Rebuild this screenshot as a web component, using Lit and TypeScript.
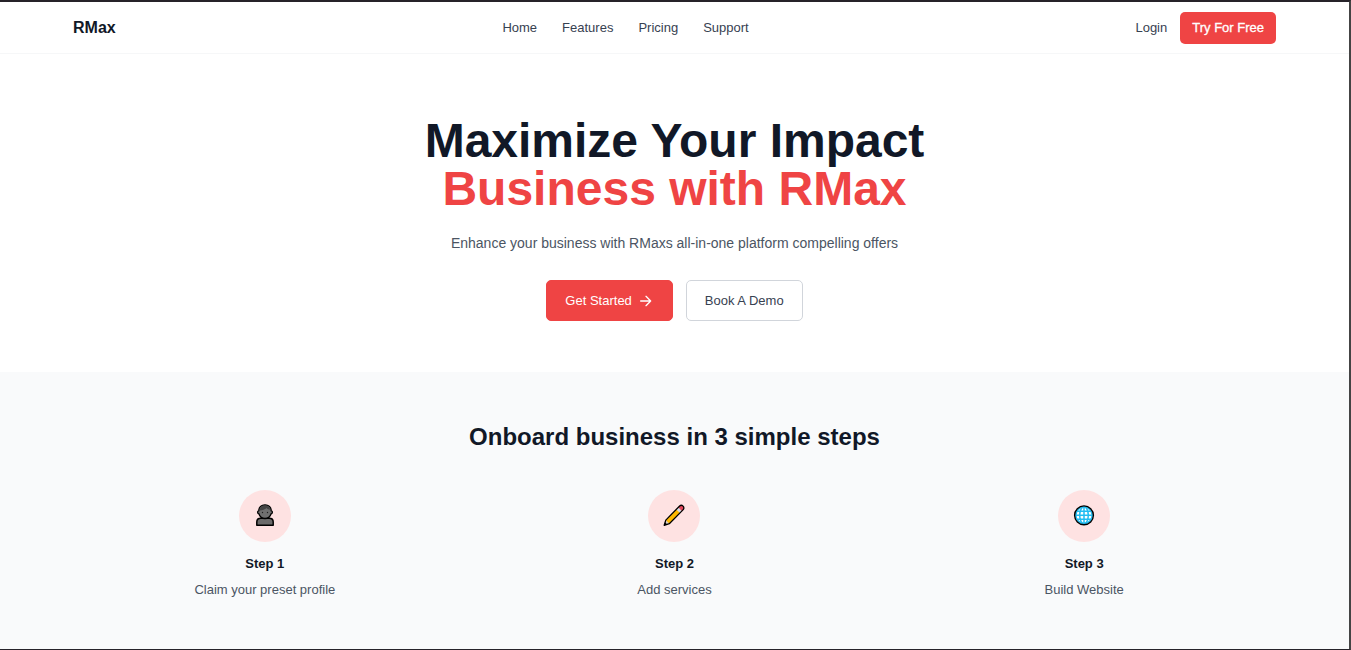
import { LitElement, html, css, svg } from "lit";
import { customElement } from "lit/decorators.js";

const personIcon = svg`
  <path d="M3.800 21.300v-3.300c0-2.400 1.700-3.700 4-3.700h8.400c2.300 0 4 1.300 4 3.700v3.300z" fill="#6b6b6b" stroke="#000" stroke-width="1.500" stroke-linejoin="round"/>
  <path d="M12 .8c-3.700 0-6.200 2.600-6.200 5.900-.7.200-1.200.8-1.200 1.600s.6 1.500 1.400 1.700c.8 2.600 3.100 4.500 6 4.500s5.200-1.900 6-4.500c.8-.2 1.400-.9 1.400-1.700s-.5-1.400-1.200-1.600c0-3.300-2.500-5.900-6.200-5.900z" fill="#707070" stroke="#000" stroke-width="1.300"/>
  <path d="M6.600 6.400c.2-3 2.300-4.900 5.400-4.900 3 0 4.900 1.700 5.300 4.200-1.700 0-2.900-.7-3.800-1.800-1.500 1.700-3.900 2.500-6.900 2.500z" fill="#444"/>
  <circle cx="9.500" cy="8.500" r=".7" fill="#222"/><circle cx="14.500" cy="8.500" r=".7" fill="#222"/>`;

const pencilIcon = svg`
  <path d="M2.200 21.300l1.600-5.200L17.400 2.200c1.200-1.200 2.700-1.100 3.700-.1s1.100 2.600-.1 3.800L7.300 19.700z" fill="#ffb900"/>
  <path d="M14.200 5.400l2.600-2.600 3.800 3.700-2.600 2.500z" fill="#d9dce3"/>
  <path d="M16.200 3.300l1.200-1.100c1.200-1.200 2.700-1.100 3.700-.1s1.100 2.600-.1 3.800L19.900 7z" fill="#e0455a"/>
  <path d="M3.800 16.100l3.500 3.600-5.100 1.600z" fill="#d8d0c8"/>
  <path d="M2.200 21.300l.9-3 2.100 2.100z"/>
  <path d="M2.200 21.300l1.600-5.200L17.400 2.200c1.200-1.200 2.700-1.100 3.700-.1s1.100 2.600-.1 3.800L7.300 19.700z" fill="none" stroke="#000" stroke-width="1.300" stroke-linejoin="round"/>`;

const globeIcon = svg`
  <circle cx="12" cy="11.300" r="9.500" fill="#fff"/>
  <g fill="none" stroke="#22bdf2" stroke-width="1.500">
    <circle cx="12" cy="11.300" r="8.200"/>
    <ellipse cx="12" cy="11.300" rx="4.300" ry="8.500"/>
    <path d="M12 2.800v17M3.500 11.300h17M5 7.300h14M5 15.300h14"/>
  </g>
  <circle cx="12" cy="11.300" r="9.400" fill="none" stroke="#000" stroke-width="1.400"/>`;

const steps = [
  { title: "Step 1", text: "Claim your preset profile", icon: personIcon },
  { title: "Step 2", text: "Add services", icon: pencilIcon },
  { title: "Step 3", text: "Build Website", icon: globeIcon },
];

@customElement("app-root")
export class AppRoot extends LitElement {
  static styles = css`
    :host {
      display: flex;
      flex-direction: column;
      box-sizing: border-box;
      min-height: 100vh;
      border: 0 solid #262329;
      border-width: 2px 2px 1px 0;
      border-right-color: #444;
      background: #fff;
      color: #374151;
      font: 13px/20px "Liberation Sans", Arial, sans-serif;
    }
    h1, h2, h3, p { margin: 0; }
    a { color: inherit; text-decoration: none; }
    button { font: inherit; cursor: pointer; }
    .header { border-bottom: 1px solid #f6f7f8; }
    .container {
      box-sizing: border-box;
      width: 100%;
      max-width: 1229px;
      margin: 0 auto;
      padding: 0 13px;
    }
    .bar {
      display: flex;
      align-items: center;
      justify-content: space-between;
      height: 51px;
    }
    .logo { color: #111827; font-size: 16px; font-weight: 700; }
    .nav { display: flex; gap: 25px; }
    .actions {
      display: flex;
      align-items: center;
      gap: 13px;
    }
    .trial {
      height: 32px;
      padding: 0 12px;
      border: 0;
      border-radius: 5px;
      background: #ef4444;
      color: #fff;
      -webkit-text-stroke: 0.3px #fff;
    }
    .hero {
      padding: 63px 13px 51px;
      text-align: center;
    }
    .headline {
      color: #111827;
      font-size: 48px;
      line-height: 48px;
      font-weight: 700;
    }
    .accent { display: block; color: #ef4444; }
    .lead {
      margin-top: 19px;
      color: #4b5563;
      font-size: 14px;
      line-height: 22px;
    }
    .buttons {
      display: flex;
      justify-content: center;
      gap: 13px;
      margin-top: 26px;
    }
    .button {
      display: flex;
      align-items: center;
      gap: 6px;
      height: 41px;
      padding: 0 18px;
      border: 1px solid #d1d5db;
      border-radius: 5px;
      background: #fff;
      color: #374151;
    }
    .primary { border-color: #ef4444; background: #ef4444; color: #fff; }
    .steps {
      flex: 1;
      padding: 51px 0 48px;
      background: #f9fafb;
      text-align: center;
    }
    .title {
      color: #111827;
      font-size: 24px;
      line-height: 28px;
      font-weight: 700;
    }
    .grid {
      display: grid;
      grid-template-columns: repeat(3, 1fr);
      gap: 26px;
      margin-top: 39px;
    }
    .disc {
      display: flex;
      align-items: center;
      justify-content: center;
      width: 52px;
      height: 52px;
      margin: 0 auto 12px;
      border-radius: 50%;
      background: #fee2e2;
    }
    .name {
      margin-bottom: 6px;
      color: #111827;
      font-size: 13px;
      line-height: 20px;
    }
    .text { color: #4b5563; }
  `;

  render() {
    return html`
      <header class="header">
        <div class="container bar">
          <a class="logo" href="#">RMax</a>
          <nav class="nav" aria-label="Main">
            <a href="#">Home</a>
            <a href="#">Features</a>
            <a href="#">Pricing</a>
            <a href="#">Support</a>
          </nav>
          <div class="actions">
            <a href="#">Login</a>
            <button class="trial" type="button">Try For Free</button>
          </div>
        </div>
      </header>
      <section class="hero">
        <h1 class="headline">
          Maximize Your Impact
          <span class="accent">Business with RMax</span>
        </h1>
        <p class="lead">Enhance your business with RMaxs all-in-one platform compelling offers</p>
        <div class="buttons">
          <button class="button primary" type="button">
            Get Started
            <svg width="16" height="16" viewBox="0 0 24 24" fill="none" stroke="currentColor" stroke-width="2" stroke-linecap="round" stroke-linejoin="round" aria-hidden="true">
              <path d="M4 12h15M12 5l7 7-7 7" />
            </svg>
          </button>
          <button class="button" type="button">Book A Demo</button>
        </div>
      </section>
      <section class="steps">
        <div class="container">
          <h2 class="title">Onboard business in 3 simple steps</h2>
          <div class="grid">
            ${steps.map(
              (step) => html`
                <article>
                  <div class="disc">
                    <svg width="24" height="24" viewBox="0 0 24 24" aria-hidden="true">${step.icon}</svg>
                  </div>
                  <h3 class="name">${step.title}</h3>
                  <p class="text">${step.text}</p>
                </article>
              `
            )}
          </div>
        </div>
      </section>
    `;
  }
}
